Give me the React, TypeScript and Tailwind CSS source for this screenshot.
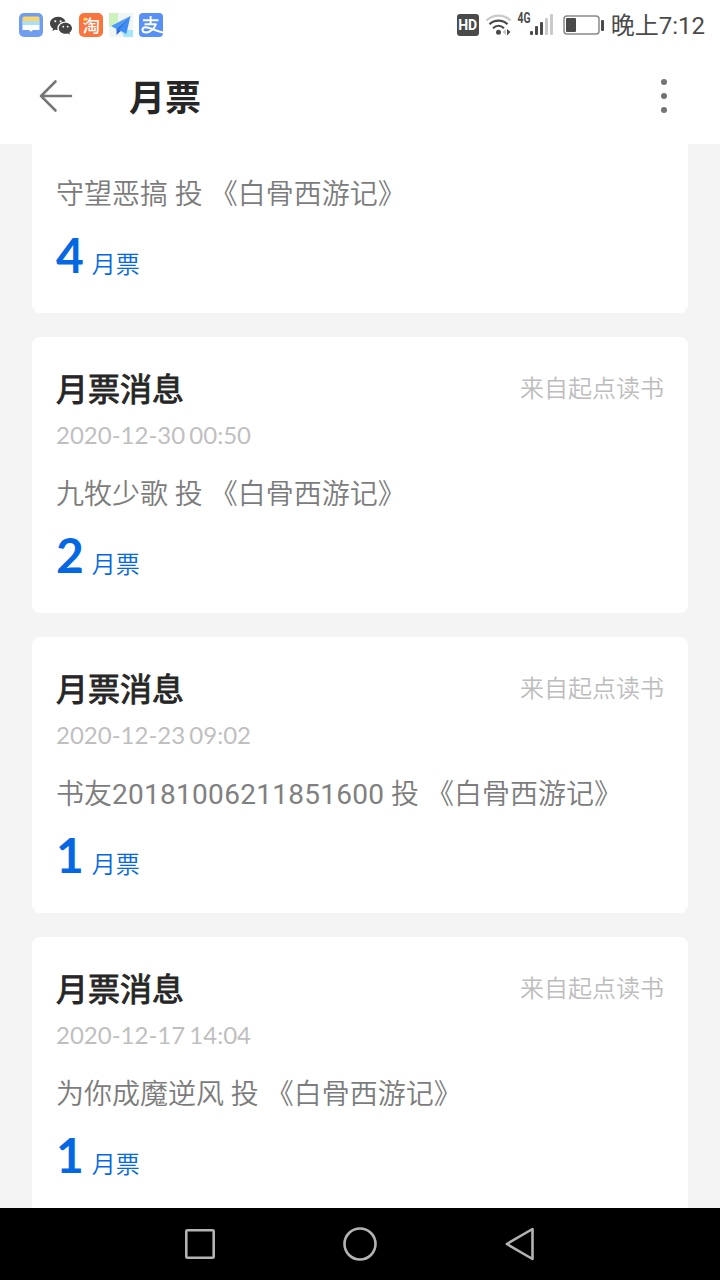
import type { ReactNode } from 'react';
import { BsWechat } from 'react-icons/bs';

type Ticket = {
  date?: string;
  user: string;
  userId?: string;
  count: number;
};

const tickets: Ticket[] = [
  { user: '守望恶搞', count: 4 },
  { date: '2020-12-30 00:50', user: '九牧少歌', count: 2 },
  { date: '2020-12-23 09:02', user: '书友', userId: '20181006211851600', count: 1 },
  { date: '2020-12-17 14:04', user: '为你成魔逆风', count: 1 },
];

function StatusBar() {
  return (
    <div className="flex h-12 shrink-0 items-center justify-between pt-0.5 pr-[15px] pl-[19px]">
      <div className="flex items-center gap-1.5">
        <svg className="h-6 w-6" viewBox="0 0 24 24">
          <rect width="24" height="24" rx="5" fill="#6f9df0" />
          <rect x="3.5" y="3.5" width="17" height="8" rx="1.5" fill="#fbd568" />
          <rect x="3.5" y="8" width="17" height="5" fill="#a9dff8" />
          <path d="M3.5 12h17v5h-6.5l-2 1.7-2-1.7H3.5z" fill="#fff" />
        </svg>
        <BsWechat className="h-[22px] w-6 text-[#444]" />
        <svg className="h-6 w-6" viewBox="0 0 24 24">
          <rect width="24" height="24" rx="5" fill="#fa7440" />
          <text x="3.6" y="18.5" fontSize="17.5" fontWeight="500" fill="#fff">
            淘
          </text>
          <circle cx="5.6" cy="6.6" r="1.5" fill="#ffd52e" />
        </svg>
        <svg className="h-6 w-6" viewBox="0 0 24 24">
          <rect width="24" height="24" fill="#f0f5f5" />
          <path d="M0 0h9v9L0 14z" fill="#cdf2be" />
          <path d="M12 17h12v7H15z" fill="#a5e6fb" />
          <path d="M21.5 3L2 13l5.5 3z" fill="#4c9bf8" />
          <path d="M21.5 3l-14 13v6l4-3.8z" fill="#2f6fd8" />
          <path d="M21.5 3L9.8 16.8l7.5 4.2z" fill="#3f8df5" />
        </svg>
        <svg className="h-6 w-6" viewBox="0 0 24 24" fill="none" stroke="#fff" strokeWidth="1.9">
          <rect width="24" height="24" rx="4" fill="#5890f6" stroke="none" />
          <path d="M4 7.200h15.500M11.600 3v8M5.500 11.200h12" />
          <path d="M17 11c-1.500 4-5.500 8.500-9.700 8.500-5 0-5-5.300-.8-5.300 4.500 0 9 3.600 17.500 5.300" />
        </svg>
      </div>

      <div className="flex items-center text-[#4a4a4a]">
        <span className="flex h-[22px] w-[22px] items-center justify-center rounded-[3px] bg-[#4a4a4a] text-[14px] leading-none font-bold text-white">
          HD
        </span>
        <svg className="ml-1.5 h-6 w-[28px]" viewBox="0 0 28 24" fill="none" strokeWidth="2.2">
          <path d="M1.5 7.5c6.5-6.5 17.5-6.5 24 0" stroke="#cacaca" />
          <path d="M4.5 11.3c5-4.8 13-4.8 18 0" stroke="#4a4a4a" />
          <path d="M8 15.2c3.3-3 7.7-3 11 0" stroke="#4a4a4a" />
          <circle cx="13.5" cy="19.3" r="2.5" fill="#4a4a4a" />
          <path d="M21 16v6l-3.5-3z" fill="#c4c4c4" />
          <path d="M22 16v6.5l3.5-3.5z" fill="#4a4a4a" />
        </svg>
        <svg className="ml-px h-6 w-[39px] overflow-visible" viewBox="0 0 39 24">
          <text x="3.5" y="10" fontFamily="Roboto" fontSize="14" fontWeight="700" textLength="13" lengthAdjust="spacingAndGlyphs" fill="#4a4a4a">
            4G
          </text>
          <g fill="#4a4a4a">
            <rect x="16" y="18" width="3" height="4" rx="1" />
            <rect x="21" y="13" width="3" height="9" rx="1" />
            <rect x="26" y="9" width="3" height="13" rx="1" />
          </g>
          <g fill="#cacaca">
            <rect x="31" y="5" width="3" height="17" rx="1" />
            <rect x="36" y="1" width="3" height="21" rx="1" />
          </g>
        </svg>
        <svg className="ml-2.5 h-6 w-[42px]" viewBox="0 0 42 24">
          <rect x="1" y="3" width="35" height="18" rx="3" fill="none" stroke="#8a8a8a" strokeWidth="1.5" />
          <rect x="3" y="5" width="10" height="14" rx="1" fill="#4a4a4a" />
          <rect x="38" y="7" width="3" height="11" rx="1" fill="#4a4a4a" />
        </svg>
        <span className="mt-0.5 ml-1.5 text-[24px] leading-none whitespace-nowrap">晚上7:12</span>
      </div>
    </div>
  );
}

function Header() {
  return (
    <header className="flex h-24 shrink-0 items-center pr-[52px] pl-[39px]">
      <svg className="h-9 w-[34px]" viewBox="0 0 34 36" fill="none" stroke="#777" strokeWidth="2.6" strokeLinecap="round" strokeLinejoin="round">
        <path d="M32 18H2M16.5 3.5L2 18l14.5 14.5" />
      </svg>
      <h1 className="ml-14 flex-1 pt-1.5 text-4xl font-bold text-[#262626]">月票</h1>
      <svg className="h-9 w-2" viewBox="0 0 8 36" fill="#737373">
        <circle cx="4" cy="4" r="3" />
        <circle cx="4" cy="18" r="3" />
        <circle cx="4" cy="32" r="3" />
      </svg>
    </header>
  );
}

function TicketCard({ date, user, userId, count }: Ticket) {
  return (
    <article className={date ? 'h-[276px] shrink-0 rounded-lg bg-white px-6 pt-7' : 'h-[169px] shrink-0 rounded-b-lg bg-white px-6 pt-[29px]'}>
      {date && (
        <div className="mb-[21px]">
          <div className="flex h-12 items-center justify-between">
            <h2 className="pt-0.5 text-[32px] leading-[48px] font-normal text-[#262626] [-webkit-text-stroke:0.9px_#262626]">月票消息</h2>
            <span className="text-2xl font-[350] text-[#bdbdbd]">来自起点读书</span>
          </div>
          <time className="mt-1.5 block h-[33px] font-[Lato] text-2xl leading-[31px] [word-spacing:-2px] text-[#bfbfbf]">{date}</time>
        </div>
      )}
      <p className="h-11 text-[28px] leading-[44px] font-[350] whitespace-nowrap text-[#7c7c7c]">
        {user}
        {userId && <span className="font-normal tracking-[0.28px] text-[#808080]">{userId}</span>} 投 《白骨西游记》
      </p>
      <div className="mt-2 flex h-[60px] items-baseline gap-2 text-[#0568e2]">
        <b className="font-[Lato] text-5xl leading-[60px] font-bold">{count}</b>
        <span className="text-2xl font-[350]">月票</span>
      </div>
    </article>
  );
}

function NavKey({ children }: { children: ReactNode }) {
  return (
    <svg className="h-10 w-10" viewBox="0 0 40 40" fill="none" stroke="#b3b3b3" strokeWidth="2.6" strokeLinejoin="round">
      {children}
    </svg>
  );
}

export default function App() {
  return (
    <div className="flex h-[1280px] w-[720px] flex-col overflow-hidden bg-white font-[Roboto,'Noto_Sans_CJK_SC',sans-serif]">
      <StatusBar />
      <Header />
      <main className="flex min-h-0 flex-1 flex-col gap-6 overflow-hidden bg-[#f4f4f4] px-8">
        {tickets.map((ticket) => (
          <TicketCard key={ticket.user} {...ticket} />
        ))}
      </main>
      <nav className="flex h-[72px] shrink-0 items-center justify-center gap-[120px] bg-black">
        <NavKey>
          <rect x="6.3" y="6.3" width="27.4" height="27.4" rx="1" />
        </NavKey>
        <NavKey>
          <circle cx="20" cy="20" r="15.5" />
        </NavKey>
        <NavKey>
          <path d="M32.5 5v30L6.8 20z" />
        </NavKey>
      </nav>
    </div>
  );
}
